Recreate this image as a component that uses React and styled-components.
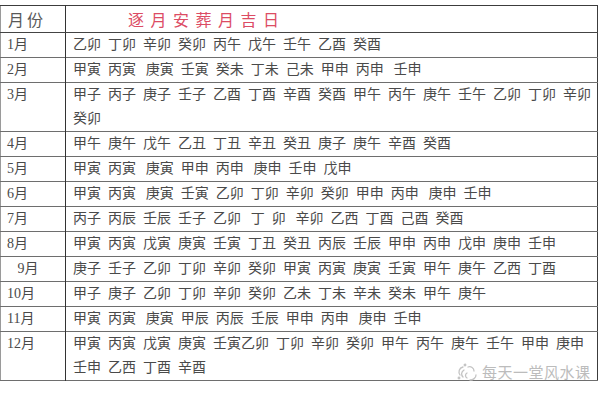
import React from "react";
import styled, { createGlobalStyle } from "styled-components";

const GlobalStyle = createGlobalStyle`
  html, body {
    margin: 0;
    padding: 0;
    background: #fff;
  }
  body {
    font-family: "Liberation Serif", "Noto Sans CJK SC", serif;
    color: #444;
  }
`;

const rows = [
  ["1月", "乙卯 丁卯 辛卯 癸卯 丙午 戊午 壬午 乙酉 癸酉"],
  ["2月", "甲寅 丙寅 \u2009庚寅 壬寅 癸未 丁未 己未 甲申 丙申 \u2009壬申"],
  ["3月", "甲子 丙子 庚子 壬子 乙酉 丁酉 辛酉 癸酉 甲午 丙午 庚午 壬午 乙卯 丁卯 辛卯 癸卯"],
  ["4月", "甲午 庚午 戊午 乙丑 丁丑 辛丑 癸丑 庚子 庚午 辛酉 癸酉"],
  ["5月", "甲寅 丙寅 \u2009庚寅 甲申 丙申 \u2009庚申 壬申 戊申"],
  ["6月", "甲寅 丙寅 \u2009庚寅 壬寅 乙卯 丁卯 辛卯 癸卯 甲申 丙申 \u2009庚申 壬申"],
  ["7月", "丙子 丙辰 壬辰 壬子 乙卯 \u2009丁 卯 \u2009辛卯 乙西 丁酉 己酉 癸酉"],
  ["8月", "甲寅 丙寅 戊寅 庚寅 壬寅 丁丑 癸丑 丙辰 壬辰 甲申 丙申 戊申 庚申 壬申"],
  ["\u2002 9月", "庚子 壬子 乙卯 丁卯 辛卯 癸卯 甲寅 丙寅 庚寅 壬寅 甲午 庚午 乙西 丁酉"],
  ["10月", "甲子 庚子 乙卯 丁卯 辛卯 癸卯 乙未 丁未 辛未 癸未 甲午 庚午"],
  ["11月", "甲寅 丙寅 \u2009庚寅 甲辰 丙辰 壬辰 甲申 丙申 \u2009庚申 壬申"],
  ["12月", "甲寅 丙寅 戊寅 庚寅 壬寅乙卯 丁卯 辛卯 癸卯 甲午 丙午 庚午 壬午 甲申 庚申 壬申 乙西 丁酉 辛酉"],
];

export default function App() {
  return (
    <>
      <GlobalStyle />
      <Page>
        <Table>
          <thead>
            <tr>
              <HeadCell>月份</HeadCell>
              <TitleCell>逐月安葬月吉日</TitleCell>
            </tr>
          </thead>
          <tbody>
            {rows.map(([month, days]) => (
              <Row key={month}>
                <MonthCell>{month}</MonthCell>
                <DaysCell>{days}</DaysCell>
              </Row>
            ))}
          </tbody>
        </Table>
        <Watermark>
          <WechatMark />
          <span>每天一堂风水课</span>
        </Watermark>
      </Page>
    </>
  );
}

function WechatMark() {
  return (
    <svg width="22" height="18" viewBox="0 0 22 18" fill="none" stroke="#c4c4c4" strokeWidth="1.3" strokeLinecap="round">
      <path d="M4 12 C2 9 3 5 7 4" />
      <path d="M7 14 C5 12 5 9 8 7" />
      <path d="M11 15 C9 14 9 11 11 10" />
      <path d="M12 4 C15 3 18 5 18 8" />
      <path d="M14 17 C17 17 20 15 20 12" />
      <circle cx="9" cy="2" r="0.8" />
      <circle cx="3" cy="15" r="0.8" />
    </svg>
  );
}

const Page = styled.div`
  position: relative;
  width: 600px;
  height: 400px;
  padding-top: 5px;
  box-sizing: border-box;
  overflow: hidden;
`;

const Table = styled.table`
  width: 598px;
  border-collapse: collapse;
  table-layout: fixed;
  border: 1px solid #3c3c3c;
  border-left-color: #9a9a9a;
`;

const HeadCell = styled.th`
  width: 57px;
  height: 26px;
  padding: 0 0 0 7px;
  text-align: left;
  font-weight: normal;
  font-size: 16px;
  letter-spacing: 3px;
  color: #595959;
  border-right: 1px solid #333;
  border-bottom: 1px solid #444;
`;

const TitleCell = styled.th`
  height: 26px;
  padding: 0 0 0 62px;
  text-align: left;
  font-weight: normal;
  font-size: 16px;
  letter-spacing: 6.5px;
  color: #dc4c64;
  border-bottom: 1px solid #444;
`;

const Row = styled.tr`
  border-bottom: 1px solid #6e6e6e;
`;

const MonthCell = styled.td`
  padding: 0 0 0 6px;
  vertical-align: top;
  font-size: 14px;
  line-height: 24px;
  white-space: pre;
  color: #4a4a4a;
  border-right: 1px solid #333;
`;

const DaysCell = styled.td`
  padding: 0 4px 0 7px;
  vertical-align: top;
  font-size: 14px;
  line-height: 24px;
  word-spacing: 3.5px;
  white-space: pre-wrap;
  color: #4a4a4a;
`;

const Watermark = styled.div`
  position: absolute;
  left: 456px;
  top: 361px;
  display: flex;
  align-items: center;
  gap: 4px;
  font-family: "Noto Sans CJK SC", sans-serif;
  font-size: 15px;
  color: #bcbcbc;
  letter-spacing: 0.5px;
`;
